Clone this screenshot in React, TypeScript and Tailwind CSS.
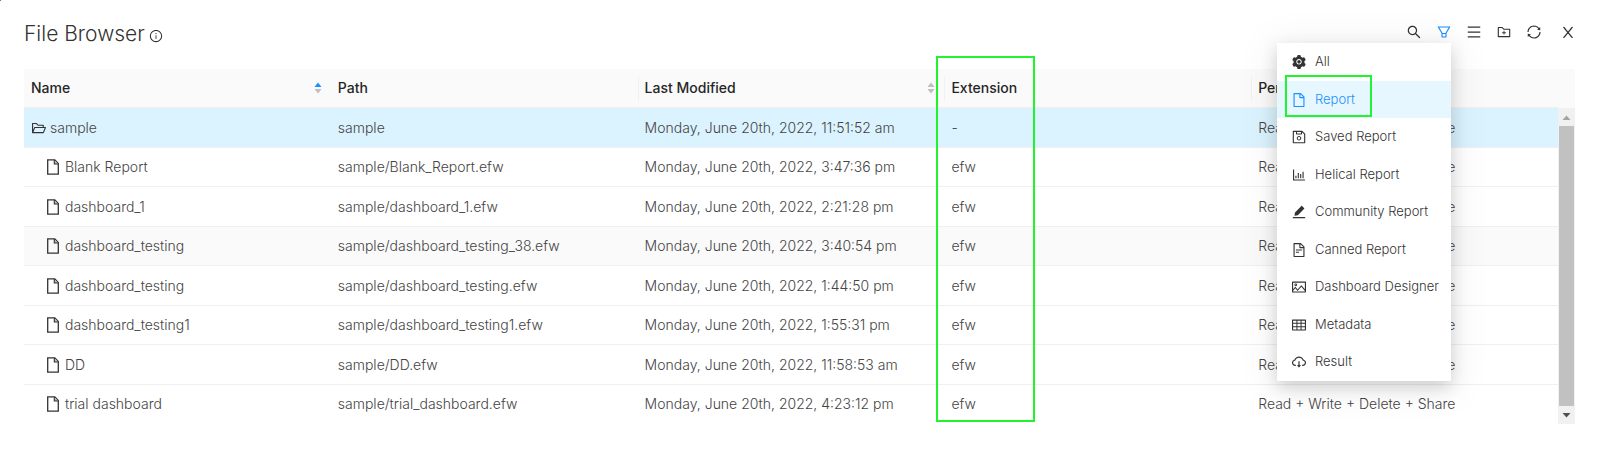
import { useState } from "react";
import {
  AiFillEdit,
  AiFillSetting,
  AiOutlineBarChart,
  AiOutlineCloudDownload,
  AiOutlineFile,
  AiOutlineFileText,
  AiOutlineFilter,
  AiOutlineFolderAdd,
  AiOutlineFolderOpen,
  AiOutlineInfoCircle,
  AiOutlineMenu,
  AiOutlinePicture,
  AiOutlineSave,
  AiOutlineSearch,
  AiOutlineSync,
  AiOutlineTable,
} from "react-icons/ai";

const permission = "Read + Write + Delete + Share";

const files = [
  { name: "sample", path: "sample", modified: "Monday, June 20th, 2022, 11:51:52 am", ext: "-", folder: true },
  { name: "Blank Report", path: "sample/Blank_Report.efw", modified: "Monday, June 20th, 2022, 3:47:36 pm", ext: "efw" },
  { name: "dashboard_1", path: "sample/dashboard_1.efw", modified: "Monday, June 20th, 2022, 2:21:28 pm", ext: "efw" },
  { name: "dashboard_testing", path: "sample/dashboard_testing_38.efw", modified: "Monday, June 20th, 2022, 3:40:54 pm", ext: "efw", hovered: true },
  { name: "dashboard_testing", path: "sample/dashboard_testing.efw", modified: "Monday, June 20th, 2022, 1:44:50 pm", ext: "efw" },
  { name: "dashboard_testing1", path: "sample/dashboard_testing1.efw", modified: "Monday, June 20th, 2022, 1:55:31 pm", ext: "efw" },
  { name: "DD", path: "sample/DD.efw", modified: "Monday, June 20th, 2022, 11:58:53 am", ext: "efw" },
  { name: "trial dashboard", path: "sample/trial_dashboard.efw", modified: "Monday, June 20th, 2022, 4:23:12 pm", ext: "efw" },
];

const filters = [
  { label: "All", icon: AiFillSetting },
  { label: "Report", icon: AiOutlineFile },
  { label: "Saved Report", icon: AiOutlineSave },
  { label: "Helical Report", icon: AiOutlineBarChart },
  { label: "Community Report", icon: AiFillEdit },
  { label: "Canned Report", icon: AiOutlineFileText },
  { label: "Dashboard Designer", icon: AiOutlinePicture },
  { label: "Metadata", icon: AiOutlineTable },
  { label: "Result", icon: AiOutlineCloudDownload },
];

const FileIcon: React.FC = () => (
  <svg viewBox="0 0 12 16" className="w-3 h-4 shrink-0" fill="none" stroke="#333" strokeWidth="1.3">
    <path d="M.7.9h7.1l3.5 3.6v10.6H.7z" />
    <path d="M7.3.9v4.1h4" fill="#bbb" strokeWidth="1.1" />
  </svg>
);

const Sorter: React.FC<{ active?: boolean }> = ({ active }) => (
  <svg viewBox="0 0 8 12" className="w-2 h-3">
    <path d="M4 .5 7.5 5h-7z" fill={active ? "#1890ff" : "#bfbfbf"} />
    <path d="M4 11.5.5 7h7z" fill="#bfbfbf" />
  </svg>
);

const App: React.FC = () => {
  const [selected, setSelected] = useState("Report");
  const [open, setOpen] = useState(true);

  return (
    <div className="relative bg-white pl-6 pr-[23px] pt-[21px] text-[#444] font-['Inter','Liberation_Sans',sans-serif] font-light">
      <span className="absolute left-0 top-0 w-px h-px bg-[#3b82d0]" />

      <header className="flex items-start justify-between h-12">
        <h1 className="flex items-center text-[21px] leading-[26px] text-[#333]">
          File Browser
          <AiOutlineInfoCircle className="ml-1 mt-1 size-3.5" />
        </h1>

        <div className="flex items-center gap-3.5 h-[22px] text-[#333]">
          <button aria-label="Search">
            <AiOutlineSearch className="size-4" />
          </button>
          <div className="relative h-[22px] flex items-center">
            <button aria-label="Filter" onClick={() => setOpen(!open)}>
              <AiOutlineFilter className="size-4 text-[#1890ff]" />
            </button>
            {open && (
              <ul className="absolute right-px top-full z-20 w-[174px] bg-white shadow-[0_6px_16px_rgba(0,0,0,0.16),0_4px_36px_8px_rgba(0,0,0,0.05)]">
                {filters.map(({ label, icon: Icon }) => (
                  <li key={label} className="relative odd:h-[38px] even:h-[37px]">
                    <button
                      onClick={() => setSelected(label)}
                      className={`flex items-center gap-2 w-full h-full px-3.5 text-[13px] whitespace-nowrap ${
                        label === selected ? "bg-[#e6f7ff] text-[#1890ff]" : ""
                      }`}
                    >
                      <Icon className={`size-4 shrink-0 ${label === selected ? "" : "text-[#333]"}`} />
                      {label}
                    </button>
                    {label === selected && (
                      <span className="absolute left-2 -top-1.5 w-[87px] h-[42px] border-2 border-[#1ff52f] pointer-events-none" />
                    )}
                  </li>
                ))}
              </ul>
            )}
          </div>
          <button aria-label="List view">
            <AiOutlineMenu className="size-4" />
          </button>
          <button aria-label="New folder">
            <AiOutlineFolderAdd className="size-4" />
          </button>
          <button aria-label="Refresh">
            <AiOutlineSync className="size-4" />
          </button>
          <button aria-label="Close" className="ml-1.5 mr-px">
            <svg viewBox="0 0 12 12" className="size-3" fill="none" stroke="currentColor" strokeWidth="1.2">
              <path d="M1.500 1 10.500 12M10.500 1 1.500 12" />
            </svg>
          </button>
        </div>
      </header>

      <div className="flex">
        <table className="flex-1 table-fixed border-separate border-spacing-0 text-[14px] leading-5 text-left whitespace-nowrap">
          <thead>
            <tr className="h-[39px] bg-[#fafafa] text-[#262626] [&>th]:px-[7px] [&>th]:font-medium [&>th]:border-b [&>th]:border-[#f0f0f0]">
              <th className="w-1/5">
                <div className="flex items-center justify-between pr-0.5">
                  Name <Sorter active />
                </div>
              </th>
              <th className="w-1/5">Path</th>
              <th className="w-1/5 relative">
                <span className="absolute left-0 top-2 h-6 w-px bg-[#f0f0f0]" />
                <div className="flex items-center justify-between pr-0.5">
                  Last Modified <Sorter />
                </div>
              </th>
              <th className="w-1/5 relative">
                <span className="absolute left-0 top-2 h-6 w-px bg-[#f0f0f0]" />
                Extension
                <span className="absolute -left-2 -top-[13px] z-10 w-[99px] h-[366px] border-2 border-[#1ff52f] pointer-events-none" />
              </th>
              <th className="w-1/5 relative">
                <span className="absolute left-0 top-2 h-6 w-px bg-[#f0f0f0]" />
                Permissions
              </th>
            </tr>
          </thead>
          <tbody>
            {files.map((file) => (
              <tr
                key={file.path}
                className={`odd:h-10 even:h-[39px] [&>td]:px-[7px] [&>td]:border-b [&>td]:border-[#f0f0f0] last:[&>td]:border-white ${
                  file.folder ? "bg-[#dbf3ff]" : file.hovered ? "bg-[#fafafa]" : ""
                }`}
              >
                <td>
                  {file.folder ? (
                    <div className="flex items-center gap-[3px]">
                      <AiOutlineFolderOpen className="size-4 text-[#333]" />
                      {file.name}
                    </div>
                  ) : (
                    <div className="flex items-center gap-1.5 pl-4">
                      <FileIcon />
                      {file.name}
                    </div>
                  )}
                </td>
                <td>{file.path}</td>
                <td>{file.modified}</td>
                <td>{file.ext}</td>
                <td>{permission}</td>
              </tr>
            ))}
          </tbody>
        </table>

        <div className="flex flex-col w-[17px] bg-[#f1f1f1]">
          <div className="h-[39px] bg-[#fafafa]" />
          <svg viewBox="0 0 17 18" className="w-[17px] h-[18px]">
            <path d="M8.500 7.500 12.500 12h-8z" fill="#a3a3a3" />
          </svg>
          <div className="flex-1 mx-px bg-[#c1c1c1]" />
          <svg viewBox="0 0 17 18" className="w-[17px] h-[18px]">
            <path d="M8.500 11.500 4.500 7h8z" fill="#505050" />
          </svg>
        </div>
      </div>
    </div>
  );
};

export default App;
